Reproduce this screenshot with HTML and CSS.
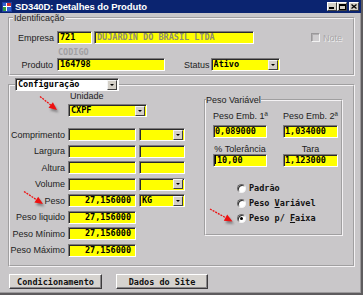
FILE: index.html
```html
<!DOCTYPE html>
<html lang="pt">
<head>
<meta charset="utf-8">
<title>SD340D: Detalhes do Produto</title>
<link rel="stylesheet" href="styles.css">
</head>
<body>
<div class="window">
  <div class="titlebar">
    <svg class="appicon" width="10" height="10" viewBox="0 0 10 10">
      <rect x="0" y="0" width="10" height="10" fill="#2040a0"/>
      <rect x="1" y="1" width="8" height="8" fill="#ffffff"/>
      <rect x="1" y="1" width="3" height="3" fill="#3060d0"/>
      <rect x="5" y="1" width="4" height="3" fill="#d03030"/>
      <rect x="1" y="5" width="3" height="4" fill="#30a040"/>
      <rect x="5" y="5" width="4" height="4" fill="#3060d0"/>
    </svg>
    <span class="title">SD340D: Detalhes do Produto</span>
    <div class="winbtns">
      <span class="wbtn"><svg width="6" height="5" viewBox="0 0 6 5"><rect x="0" y="3" width="5" height="2" fill="#000"/></svg></span>
      <span class="wbtn"><svg width="7" height="6" viewBox="0 0 7 6"><rect x="0.5" y="0.5" width="6" height="5" fill="none" stroke="#000"/><rect x="0" y="0" width="7" height="2" fill="#000"/></svg></span>
      <span class="wbtn close"><svg width="6" height="5" viewBox="0 0 6 5"><path d="M0.5 0.5 L5.5 4.5 M5.5 0.5 L0.5 4.5" stroke="#000" stroke-width="1.3"/></svg></span>
    </div>
  </div>

  <fieldset class="group ident">
    <legend>Identificação</legend>
    <div class="row r-emp">
      <span class="lbl l-emp">Empresa</span>
      <div class="fld f-emp">721</div>
      <div class="fld f-name dis">DUJARDIN DO BRASIL LTDA</div>
      <div class="chk"><span class="chkbox"></span><span class="chktext">Note</span></div>
    </div>
    <div class="codigo">CODIGO</div>
    <div class="row r-prod">
      <span class="lbl l-prod">Produto</span>
      <div class="fld f-prod">164798</div>
      <span class="lbl l-status">Status</span>
      <div class="fld sel f-status"><span class="seltext">Ativo</span><span class="dd"></span></div>
    </div>
  </fieldset>

  <fieldset class="group config">
    <legend class="cfg-legend"><div class="fld sel f-config white"><span class="seltext">Configuração</span><span class="dd"></span></div></legend>
    <div class="cfg-inner">
      <div class="leftcol">
        <div class="unid-label">Unidade</div>
        <div class="fld sel f-unid"><span class="seltext">CXPF</span><span class="dd"></span></div>
        <div class="dims">
          <div class="drow"><span class="lbl dl">Comprimento</span><div class="fld d1"></div><div class="fld sel d2"><span class="seltext"></span><span class="dd"></span></div></div>
          <div class="drow"><span class="lbl dl">Largura</span><div class="fld d1"></div><div class="fld d2"></div></div>
          <div class="drow"><span class="lbl dl">Altura</span><div class="fld d1"></div><div class="fld d2"></div></div>
          <div class="drow"><span class="lbl dl">Volume</span><div class="fld d1"></div><div class="fld sel d2"><span class="seltext"></span><span class="dd"></span></div></div>
          <div class="drow"><span class="lbl dl">Peso</span><div class="fld d1 num">27,156000</div><div class="fld sel d2"><span class="seltext">KG</span><span class="dd"></span></div></div>
          <div class="drow"><span class="lbl dl">Peso liquido</span><div class="fld d1 num">27,156000</div></div>
          <div class="drow"><span class="lbl dl">Peso Mínimo</span><div class="fld d1 num">27,156000</div></div>
          <div class="drow"><span class="lbl dl">Peso Máximo</span><div class="fld d1 num">27,156000</div></div>
        </div>
      </div>

      <fieldset class="group pv">
        <legend class="pv-legend">Peso Variável</legend>
        <div class="pvgrid">
          <div class="pvl pvl-a">Peso Emb. 1ª</div>
          <div class="pvl pvl-a">Peso Emb. 2ª</div>
          <div class="fld pvf">0,089000</div>
          <div class="fld pvf">1,034000</div>
          <div class="pvl pvl-b">% Tolerância</div>
          <div class="pvl pvl-b">Tara</div>
          <div class="fld pvf"><span class="caret"></span>10,00</div>
          <div class="fld pvf">1,123000</div>
        </div>
        <div class="radios">
          <div class="radio"><span class="rcircle"></span><span class="rtext">Padrão</span></div>
          <div class="radio"><span class="rcircle"></span><span class="rtext">Peso <u>V</u>ariável</span></div>
          <div class="radio"><span class="rcircle on"></span><span class="rtext">Peso p/ <u>F</u>aixa</span></div>
        </div>
      </fieldset>
    </div>
  </fieldset>

  <div class="buttons">
    <button class="btn b1" type="button">Condicionamento</button>
    <button class="btn b2" type="button">Dados do Site</button>
  </div>

  <svg class="arrows" width="363" height="295" viewBox="0 0 363 295">
    <defs>
      <filter id="blur" x="-50%" y="-50%" width="200%" height="200%"><feGaussianBlur stdDeviation="0.9"/></filter>
    </defs>
    <g fill="#6a686a" opacity="0.75" filter="url(#blur)">
      <polygon points="58.5,112.5 50,110.3 54.4,104.8"/>
      <polygon points="44.5,206.5 35.9,205 39.7,199.2"/>
      <polygon points="234,224 225.3,223.2 228.7,217"/>
    </g>
    <g stroke="#ee1010" stroke-width="1.3" stroke-dasharray="2 1" fill="none">
      <line x1="40" y1="96.5" x2="51" y2="105.2"/>
      <line x1="24" y1="191.5" x2="36.5" y2="199.7"/>
      <line x1="210" y1="209" x2="225.7" y2="217.7"/>
    </g>
    <g fill="#ee1010">
      <polygon points="57,110 48.5,107.8 52.9,102.3"/>
      <polygon points="43,204 34.4,202.5 38.2,196.7"/>
      <polygon points="232.5,221.5 223.8,220.7 227.2,214.5"/>
    </g>
  </svg>
</div>
</body>
</html>
```

FILE: styles.css
```css
* { box-sizing: border-box; }
html, body { margin: 0; padding: 0; }
body {
  width: 363px;
  height: 295px;
  overflow: hidden;
  background: #c9c7c9;
  font-family: "Liberation Sans", Arial, sans-serif;
  font-size: 9px;
  color: #222;
}
.window {
  position: relative;
  width: 363px;
  height: 295px;
  background: #c9c7c9;
  border-right: 2px solid #5e5c5e;
  border-bottom: 2px solid #5e5c5e;
  box-shadow: inset -1px -1px 0 #9c9a9c;
}
.titlebar {
  display: flex;
  align-items: center;
  height: 13px;
  background: #0b2470;
  color: #fff;
  padding: 0 2px 0 2px;
}
.appicon { flex: none; margin-right: 3px; }
.title {
  font-weight: bold;
  font-size: 9.5px;
  letter-spacing: -0.1px;
  line-height: 13px;
  white-space: nowrap;
}
.winbtns { margin-left: auto; display: flex; }
.wbtn {
  width: 10px;
  height: 9px;
  background: #d4d0c8;
  border: 1px solid;
  border-color: #fff #404040 #404040 #fff;
  display: flex;
  align-items: center;
  justify-content: center;
}
.wbtn.close { margin-left: 2px; }

/* group boxes */
.group {
  border: 2px groove #f4f2f4;
  padding: 0;
  margin: 0;
  min-width: 0;
}
.group > legend {
  font-size: 9px;
  line-height: 10px;
  padding: 0 1px;
  margin-left: 3px;
  color: #222;
}
.ident {
  margin-left: 8px;
  width: 347px;
  height: 63px;
}

/* fields */
.row { display: flex; align-items: center; height: 13px; }
.lbl { flex: none; text-align: right; white-space: nowrap; }
.fld {
  flex: none;
  height: 13px;
  background: #ffff00;
  border: 1px solid;
  border-color: #7c7a7c #ffffff #ffffff #7c7a7c;
  box-shadow: inset 1px 1px 0 #2a2a2a;
  font-family: "DejaVu Sans Mono", "Liberation Mono", monospace;
  font-weight: bold;
  font-size: 8.5px;
  line-height: 11px;
  padding-left: 2px;
  color: #000;
  white-space: nowrap;
  overflow: hidden;
}
.fld.white { background: #ffffff; }
.fld.num { text-align: right; padding-right: 4px; padding-left: 0; }
.sel { display: flex; padding-right: 1px; }
.seltext { flex: 1; overflow: hidden; }
.dd {
  flex: none;
  width: 10px;
  height: 10px;
  margin-top: 0.5px;
  background: #d4d0c8;
  border: 1px solid;
  border-color: #f4f4f4 #404040 #404040 #f4f4f4;
  position: relative;
}
.dd::after {
  content: "";
  position: absolute;
  left: 2px;
  top: 3px;
  border-left: 2px solid transparent;
  border-right: 2px solid transparent;
  border-top: 2px solid #000;
}

.r-emp { margin-top: 8px; }
.l-emp { width: 44px; margin-right: 3px; }
.f-emp { width: 35px; }
.f-name { width: 160px; margin-left: 2px; color: #8e8c74; }
.chk { display: flex; align-items: center; margin-left: 57px; }
.chkbox {
  width: 9px;
  height: 9px;
  border: 1px solid;
  border-color: #9a989a #f2f2f2 #f2f2f2 #9a989a;
  box-shadow: inset 1px 1px 0 #b0aeb0;
  background: #cfcdcf;
}
.chktext {
  margin-left: 3px;
  color: #a9a7a9;
  text-shadow: 1px 1px 0 #eeeeee;
}
.codigo {
  margin: 4px 0 0 48px;
  height: 9px;
  font-family: "DejaVu Sans Mono", "Liberation Mono", monospace;
  font-weight: bold;
  font-size: 8.5px;
  line-height: 9px;
  color: #a2a0a2;
}
.r-prod { margin-top: 1px; }
.l-prod { width: 43px; margin-right: 4px; }
.f-prod { width: 108px; }
.l-status { margin-left: 19px; margin-right: 1px; }
.f-status { width: 69px; }

/* configuration group */
.config {
  margin: 2px 0 0 8px;
  width: 347px;
  height: 189px;
}
.config > legend.cfg-legend {
  margin-left: 5px;
  padding: 0;
  line-height: 13px;
}
.f-config { width: 104px; }
.cfg-inner { display: flex; align-items: flex-start; }
.leftcol { width: 175px; flex: none; }
.unid-label { margin-left: 60px; height: 10px; line-height: 10px; }
.f-unid { width: 79px; margin: 3px 0 0 58px; }
.dims { margin-top: 11px; display: flex; flex-direction: column; gap: 3.5px; }
.drow { display: flex; align-items: center; height: 13px; }
.dl { width: 55px; margin-right: 3px; }
.d1 { width: 68px; }
.d2 { width: 46px; margin-left: 3px; }

/* peso variavel */
.pv {
  margin: 4px 0 0 19px;
  width: 139px;
  height: 141px;
}
.pv > legend.pv-legend { margin-left: 0; padding: 0; }
.pvgrid {
  display: grid;
  grid-template-columns: 54px 55px;
  column-gap: 16px;
  padding-left: 7px;
  margin-top: 6px;
}
.pvl { text-align: center; height: 10px; line-height: 10px; white-space: nowrap; }
.pvl-a { margin-bottom: 4px; }
.pvl-b { margin-top: 6px; }
.pvf { width: 100%; padding-left: 1px; }
.caret {
  display: inline-block;
  width: 1px;
  height: 9px;
  background: #000;
  vertical-align: -1px;
  margin-right: 1px;
}
.radios { margin: 13.5px 0 0 31px; display: flex; flex-direction: column; }
.radio { display: flex; align-items: center; height: 15px; }
.rcircle {
  width: 9px;
  height: 9px;
  border-radius: 50%;
  background: #fff;
  border: 1px solid;
  border-color: #6a686a #f4f4f4 #f4f4f4 #6a686a;
  box-shadow: inset 1px 1px 0 #303030;
  position: relative;
  flex: none;
}
.rcircle.on::after {
  content: "";
  position: absolute;
  left: 2px;
  top: 2px;
  width: 3px;
  height: 3px;
  border-radius: 50%;
  background: #000;
}
.rtext {
  margin-left: 3px;
  font-family: "DejaVu Sans Mono", "Liberation Mono", monospace;
  font-weight: bold;
  font-size: 8.5px;
  color: #111;
  white-space: nowrap;
}
.rtext u { text-underline-offset: 1px; }

/* buttons */
.buttons { display: flex; margin: 7px 0 0 9px; }
.btn {
  height: 15px;
  padding: 0;
  background: #d6d3cf;
  border: 1px solid;
  border-color: #ffffff #3c3a3c #3c3a3c #ffffff;
  box-shadow: inset -1px -1px 0 #8a888a;
  font-family: "DejaVu Sans Mono", "Liberation Mono", monospace;
  font-weight: bold;
  font-size: 8.5px;
  line-height: 12px;
  color: #111;
}
.b1 { width: 93px; }
.b2 { width: 92px; margin-left: 14px; }

.arrows { position: absolute; left: 0; top: 0; pointer-events: none; }
```
